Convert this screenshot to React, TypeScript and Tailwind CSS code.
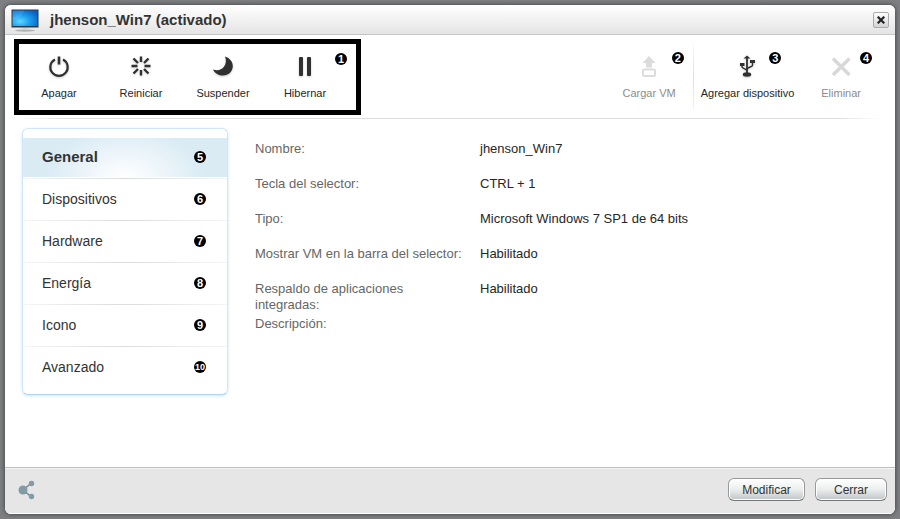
import type { ReactNode } from 'react';

const details = [
  ['Nombre:', 'jhenson_Win7'],
  ['Tecla del selector:', 'CTRL + 1'],
  ['Tipo:', 'Microsoft Windows 7 SP1 de 64 bits'],
  ['Mostrar VM en la barra del selector:', 'Habilitado'],
  ['Respaldo de aplicaciones integradas:', 'Habilitado'],
  ['Descripción:', ''],
];

const sections = ['General', 'Dispositivos', 'Hardware', 'Energía', 'Icono', 'Avanzado'];

function Badge({ n }: { n: number }) {
  return (
    <span
      className={`flex size-3 shrink-0 items-center justify-center rounded-full bg-black leading-3 font-bold text-white ${
        n > 9 ? 'text-[9px]' : 'text-[11px]'
      }`}
    >
      {n}
    </span>
  );
}

function ScreenIcon() {
  return (
    <svg width="28" height="23" viewBox="0 0 28 23" aria-hidden="true">
      <defs>
        <radialGradient id="screen" cx="0.3" cy="0.7" r="0.85">
          <stop offset="0" stopColor="#62d6ff" />
          <stop offset="0.45" stopColor="#1c9ff0" />
          <stop offset="1" stopColor="#0a5cc0" />
        </radialGradient>
      </defs>
      <ellipse cx="14" cy="21.500" rx="10" ry="1.200" fill="#8d8d8d" opacity="0.6" />
      <path d="M10 20.500h8l-1-2h-6z" fill="#d5dade" />
      <path d="M0.500 0.500h27V18.500H0.500z" fill="#2b3b48" />
      <path d="M1.500 1.500h25V17H1.500z" fill="url(#screen)" />
      <path d="M1.500 11C8 10 12 6 13 1.500H1.500z" fill="#fff" opacity="0.1" />
    </svg>
  );
}

const iconClass = 'size-6 drop-shadow-[0_1px_1px_rgba(0,0,0,0.2)]';
const fadedIconClass = 'size-6';

const icons: Record<string, ReactNode> = {
  power: (
    <svg viewBox="0 0 24 24" className={iconClass} fill="none" stroke="#303030" strokeWidth="2.200" aria-hidden="true">
      <path d="M8 5.400A8.700 8.700 0 1 0 16 5.400" />
      <path d="M12 2.500v8" strokeWidth="2.600" />
    </svg>
  ),
  restart: (
    <svg viewBox="0 0 24 24" className={iconClass} fill="none" stroke="#303030" strokeWidth="2.400" aria-hidden="true">
      <path d="M12 2.500v5.500M12 16v5.500M2.500 12h6M15.500 12h6M4.500 4.500l4.500 4.500M15 15l4.500 4.500M19.500 4.500l-4.500 4.500M9 15l-4.500 4.500" />
    </svg>
  ),
  moon: (
    <svg viewBox="0 0 24 24" className={iconClass} fill="#303030" aria-hidden="true">
      <path d="M14 2.500C19 4 22 8 21.800 12.500C21.500 17.500 17.500 21.500 12 21.500C8 21.500 4 19.500 2 15.500C6.500 17 10.500 16 12.800 13C15.300 9.700 15.500 6 14 2.500Z" />
    </svg>
  ),
  pause: (
    <svg viewBox="0 0 24 24" className={iconClass} fill="#303030" aria-hidden="true">
      <rect x="6" y="3" width="4" height="19" rx="1" />
      <rect x="14" y="3" width="4" height="19" rx="1" />
    </svg>
  ),
  upload: (
    <svg viewBox="0 0 24 24" className={fadedIconClass} fill="none" aria-hidden="true">
      <path d="M12 2l6.500 7H15V13.500H9V9H5.500z" fill="#dcdcdc" />
      <rect x="6" y="15.500" width="12" height="6.500" rx="1" stroke="#dcdcdc" strokeWidth="2" />
    </svg>
  ),
  usb: (
    <svg viewBox="0 0 24 24" className={iconClass} fill="none" stroke="#303030" strokeWidth="1.400" aria-hidden="true">
      <path d="M12 3v17" strokeWidth="1.800" />
      <path d="M12 1.500l3.500 3h-7z" fill="#303030" stroke="none" />
      <path d="M7 10v3c0 1 3.500 1.500 5 3.500M17.500 7v4.500c0 1-4 1.500-5.500 3.500" />
      <path d="M5 9h4.500v3H5zM15 6h5v3h-5z" fill="#303030" stroke="none" />
      <ellipse cx="12" cy="20.500" rx="4.200" ry="2.200" fill="#303030" stroke="none" />
    </svg>
  ),
  remove: (
    <svg viewBox="0 0 24 24" className={fadedIconClass} fill="none" stroke="#d8d8d8" strokeWidth="3.500" aria-hidden="true">
      <path d="M4 4.500l16.500 16.500M20.500 4.500l-16.500 16.500" />
    </svg>
  ),
};

interface ToolProps {
  icon: string;
  label: string;
  disabled?: boolean;
}

function Tool({ icon, label, disabled }: ToolProps) {
  return (
    <button
      type="button"
      disabled={disabled}
      className="flex h-[46px] flex-col items-center justify-between text-[11px] leading-[14px] whitespace-nowrap text-[#262626] disabled:text-[#8c8c8c]"
    >
      {icons[icon]}
      {label}
    </button>
  );
}

function FooterButton({ children, width }: { children: string; width: string }) {
  return (
    <button
      type="button"
      className={`${width} h-[23px] rounded-md border border-[#999] border-b-[#777] bg-linear-to-b from-white via-[#eceeee] to-[#bfc4c5] text-xs text-[#333] shadow-[inset_0_0_0_1px_#fff]`}
    >
      {children}
    </button>
  );
}

export default function App() {
  return (
    <div className="flex min-h-screen flex-col bg-[#7e7f82] p-[5px] font-['Liberation_Sans',Arial,sans-serif]">
      <div className="flex grow flex-col overflow-hidden rounded-md bg-white shadow-[0_0_5px_rgba(0,0,0,0.55)]">
        <header className="flex h-[30px] items-center border-b border-[#c6c6c6] bg-linear-to-b from-white to-[#e4e4e4] px-[6px]">
          <div className="pt-[2px]">
            <ScreenIcon />
          </div>
          <h1 className="grow pt-[2px] pl-[11px] text-[15px] font-bold text-[#333]">jhenson_Win7 (activado)</h1>
          <button
            type="button"
            aria-label="Cerrar ventana"
            className="flex size-4 items-center justify-center rounded-xs border border-[#aaa] bg-linear-to-b from-white to-[#d2d4d8]"
          >
            <svg width="8" height="8" viewBox="0 0 8 8" stroke="#222" strokeWidth="2.200" aria-hidden="true">
              <path d="M0.700 0.700l6.600 6.600M7.300 0.700L0.700 7.300" />
            </svg>
          </button>
        </header>

        <div className="mx-[9px] flex items-start justify-between pt-1">
          <div className="flex h-[76px] w-[347px] items-start border-[5px] border-black pt-[10px]">
            <div className="-ml-px grid w-[328px] shrink-0 grid-cols-4">
              <Tool icon="power" label="Apagar" />
              <Tool icon="restart" label="Reiniciar" />
              <Tool icon="moon" label="Suspender" />
              <Tool icon="pause" label="Hibernar" />
            </div>
            <div className="-mt-px -ml-[11px]">
              <Badge n={1} />
            </div>
          </div>
          <div className="flex items-start pt-[7px] pr-[14px]">
            <div className="flex pt-2">
              <Tool icon="upload" label="Cargar VM" disabled />
            </div>
            <div className="-ml-1 pt-[6px]">
              <Badge n={2} />
            </div>
            <div className="ml-[9px] h-16 w-px bg-linear-to-b from-[#f5f5f5] via-[#ddd] to-[#f5f5f5]" />
            <div className="flex pt-2 pl-[7px]">
              <Tool icon="usb" label="Agregar dispositivo" />
            </div>
            <div className="-ml-[25px] pt-[6px]">
              <Badge n={3} />
            </div>
            <div className="flex pt-2 pl-10">
              <Tool icon="remove" label="Eliminar" disabled />
            </div>
            <div className="-ml-px pt-[6px]">
              <Badge n={4} />
            </div>
          </div>
        </div>
        <div className="mx-[14px] mt-[3px] h-px shrink-0 bg-[linear-gradient(to_right,transparent,#ddd_5%,#ddd_95%,transparent)]" />

        <main className="flex grow items-start pt-[9px] pl-[17px]">
          <nav
            aria-label="Secciones"
            className="w-[206px] shrink-0 rounded-md border border-[#cfe6f8] border-b-[#aed4f6] pt-[9px] pb-[6px] shadow-[0_1px_3px_rgba(130,190,240,0.4)]"
          >
            {sections.map((section, i) => (
              <div key={section}>
                {i > 0 && (
                  <div className="h-px bg-linear-to-r from-[#f5f5f5] via-[#dcdcdc] to-[#f5f5f5]" />
                )}
                <button
                  type="button"
                  aria-current={i === 0 ? 'page' : undefined}
                  className={`flex w-full items-center justify-between pr-[21px] pb-px pl-[19px] text-left text-[#333] ${
                    i === 0
                      ? 'mb-px h-[39px] bg-[radial-gradient(ellipse_80px_48px_at_50%_100%,#fff,#daebf4)] text-[15px] font-bold'
                      : 'h-[41px] text-sm'
                  }`}
                >
                  {section}
                  <Badge n={i + 5} />
                </button>
              </div>
            ))}
          </nav>
          <dl className="min-w-0 grow pt-[13px] pl-[27px] text-[13px] leading-4">
            {details.map(([label, value]) => (
              <div key={label} className="flex min-h-[35px]">
                <dt className="w-[225px] shrink-0 pr-[15px] pb-[3px] text-[#666]">{label}</dt>
                <dd className="text-[#262626]">{value}</dd>
              </div>
            ))}
          </dl>
        </main>

        <footer className="flex h-[47px] items-center border-t border-b border-t-[#bdbdbd] border-b-white bg-[#e6e6e6] pr-2 pb-[2px] pl-[13px] shadow-[inset_0_1px_0_#f5f5f5]">
          <button type="button" aria-label="Compartir">
            <svg width="18" height="20" viewBox="0 0 18 20" fill="#829ba6" aria-hidden="true">
              <path d="M5 10l8.500-7M5 10l8.500 7" stroke="#70858f" strokeWidth="1.500" />
              <circle cx="5" cy="10" r="4.500" />
              <circle cx="13.500" cy="3.500" r="2.700" />
              <circle cx="13.500" cy="16.500" r="2.700" />
            </svg>
          </button>
          <div className="ml-auto flex gap-[10px]">
            <FooterButton width="w-[77px]">Modificar</FooterButton>
            <FooterButton width="w-[72px]">Cerrar</FooterButton>
          </div>
        </footer>
      </div>
    </div>
  );
}
